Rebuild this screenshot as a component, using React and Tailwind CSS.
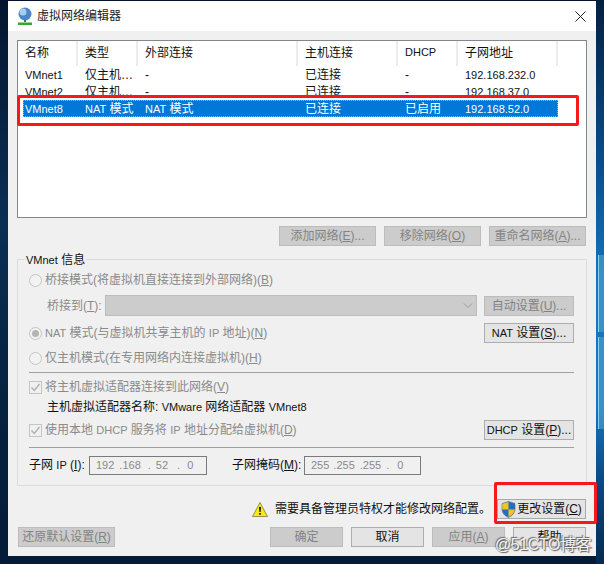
const hl = 'text-white bg-[#0078d7]'

// Latin runs are a bit smaller than the CJK text around them
function L({ children }) {
  return <span className="text-[11px]">{children}</span>
}

function Btn({ w = 'w-[97px]', off, children }) {
  return (
    <div
      className={`flex h-5 shrink-0 items-center justify-center whitespace-nowrap border ${w} ${
        off ? 'border-[#bcbcbc] bg-[#cccccc] text-[#838383]' : 'border-[#adadad] bg-[#e4e4e4] text-[#111]'
      }`}
    >
      <span>{children}</span>
    </div>
  )
}

function Radio({ on }) {
  return (
    <span className="mr-[3px] flex h-[13px] w-[13px] shrink-0 items-center justify-center rounded-full border border-[#c4c4c4] bg-[#f2f2f2]">
      {on && <span className="h-[7px] w-[7px] rounded-full bg-[#b4b4b4]" />}
    </span>
  )
}

function Check() {
  return (
    <span className="mr-[3px] flex h-[13px] w-[13px] shrink-0 items-center justify-center border border-[#c4c4c4] bg-[#f0f0f0]">
      <svg width="11" height="11" viewBox="0 0 11 11" fill="none">
        <path d="M1.5 5.5 4.3 8.5 9.5 2" stroke="#b0b0b0" strokeWidth="1.4" />
      </svg>
    </span>
  )
}

function Row({ cols, className = 'text-[#111]' }) {
  const widths = ['w-[55px] pl-[2px]', 'w-[60px] pl-[7px]', 'w-[160px] pl-[7px]', 'w-[100px] pl-[7px]', 'w-[60px] pl-[7px]', 'w-[100px] pl-[7px]']
  return (
    <div className={`flex h-[17px] w-[535px] items-center overflow-hidden whitespace-nowrap ${className}`}>
      {cols.map((c, i) => (
        <div key={i} className={`shrink-0 ${widths[i]}`}>{c}</div>
      ))}
    </div>
  )
}

function Head({ w, children }) {
  return (
    <div className={`flex h-[25px] shrink-0 items-center border-r-2 border-[#ececec] pl-[7px] pb-[2px] text-[#111] ${w}`}>{children}</div>
  )
}

function IpBox({ w = 'w-[118px]', children }) {
  return (
    <div className={`flex h-[19px] items-center whitespace-pre border border-[#7a7a7a] bg-[#f0f0f0] pl-[6px] text-[11px] text-[#8a8a8a] ${w}`}>
      {children}
    </div>
  )
}

function Globe() {
  return (
    <svg width="16" height="18" viewBox="0 0 16 18">
      <circle cx="8" cy="7" r="6.5" fill="#4a86c8" />
      <circle cx="6" cy="5" r="3.5" fill="#a9cdf0" />
      <path d="M8 13v2" stroke="#5a6a5a" strokeWidth="2" />
      <path d="M1 15.5h14V18H1z" fill="#2faa2f" />
    </svg>
  )
}

function Shield() {
  return (
    <svg width="15" height="17" viewBox="0 0 15 17">
      <path d="M7.5.5 14 2.5V8c0 4-3 7-6.500 8.500C4 15 1 12 1 8V2.500z" fill="#1f6fc4" stroke="#5a6a80" strokeWidth=".6" />
      <path d="M7.500 1v7.500H1.200V8 2.800zM7.500 8.500h6.300C13.500 12 10.800 14.800 7.500 16z" fill="#f5c21e" />
    </svg>
  )
}

export default function App() {
  return (
    <div className="relative h-[564px] w-[604px] overflow-hidden bg-[linear-gradient(180deg,#03152e_0%,#0a2f55_40%,#062544_62%,#041a38_100%)] px-2 pt-px text-xs leading-none [font-family:'Liberation_Sans','Noto_Sans_CJK_SC',sans-serif]">
      {/* wallpaper showing on the right of the dialog */}
      <div className="absolute bottom-0 right-0 top-0 w-2 bg-[linear-gradient(180deg,#04203f_0%,#0a4f8f_30%,#1575bd_50%,#1575bd_72%,#0a4a85_85%,#052a50_100%)]">
        <div className="absolute left-[2px] right-0 top-[255px] h-[77px] border-l border-[#8fd0e8] bg-[#5aaed8]/50" />
        <div className="absolute left-[2px] right-0 top-[337px] h-[92px] border-l border-[#8fd0e8] bg-[#5aaed8]/50" />
      </div>

      <div className="relative h-[555px] w-[588px] bg-[#f0f0f0]">
        <div className="flex h-[30px] items-center justify-between bg-white pl-[9px] pr-[10px]">
          <div className="flex items-center gap-[4px] text-[#222]">
            <Globe />
            <span className="text-xs">虚拟网络编辑器</span>
          </div>
          <svg width="11" height="11" viewBox="0 0 11 11" stroke="#222" strokeWidth="1" fill="none">
            <path d="M.5.5l10 10M10.500.5l-10 10" />
          </svg>
        </div>

        <div className="px-[9px] pt-[9px]">
          <div className="h-[178px] w-[570px] border border-[#82878c] bg-white pl-[5px]">
            <div className="flex">
              <Head w="w-[55px] !pl-[2px]">名称</Head>
              <Head w="w-[60px]">类型</Head>
              <Head w="w-[160px]">外部连接</Head>
              <Head w="w-[100px]">主机连接</Head>
              <Head w="w-[60px]"><L>DHCP</L></Head>
              <Head w="w-[100px]">子网地址</Head>
            </div>
            <Row cols={[<L>VMnet1</L>, '仅主机…', '-', '已连接', '-', <L>192.168.232.0</L>]} />
            <Row cols={[<L>VMnet2</L>, '仅主机…', '-', '已连接', '-', <L>192.168.37.0</L>]} />
            <Row
              className={`${hl} outline-1 -outline-offset-1 outline-dotted outline-[#e8a050]`}
              cols={[<L>VMnet8</L>, <><L>NAT</L> 模式</>, <><L>NAT</L> 模式</>, '已连接', '已启用', <L>192.168.52.0</L>]}
            />
          </div>

          <div className="mr-px mt-[8px] flex justify-end gap-[8px]">
            <Btn off>添加网络(<u>E</u>)...</Btn>
            <Btn off>移除网络(<u>O</u>)</Btn>
            <Btn off>重命名网络(<u>A</u>)...</Btn>
          </div>

          <div className="relative mt-[13px] h-[227px] w-[570px] border border-[#dcdcdc] pl-[11px] pr-[12px] pt-[10px]">
            <span className="absolute -top-[6px] left-[7px] bg-[#f0f0f0] px-px text-[#111]"><L>VMnet</L> 信息</span>

            <div className="flex h-5 items-center text-[#8a8a8a]">
              <Radio /><span>桥接模式(将虚拟机直接连接到外部网络)(<u>B</u>)</span>
            </div>

            <div className="mt-[5px] flex h-[21px] items-center text-[#8a8a8a]">
              <span className="w-[76px] pl-[18px]">桥接到(<u>T</u>):</span>
              <div className="flex h-[21px] w-[372px] items-center justify-end border border-[#bcbcbc] bg-[#cccccc] pr-[3px]">
                <svg width="10" height="6" viewBox="0 0 10 6" fill="none" stroke="#9a9a9a">
                  <path d="M1 .5l4 4 4-4" />
                </svg>
              </div>
              <div className="ml-[7px]"><Btn off w="w-[90px]">自动设置(<u>U</u>)...</Btn></div>
            </div>

            <div className="mt-[7px] flex h-5 items-center justify-between text-[#8a8a8a]">
              <div className="flex items-center">
                <Radio on /><span><L>NAT</L> 模式(与虚拟机共享主机的 <L>IP</L> 地址)(<u>N</u>)</span>
              </div>
              <Btn w="w-[90px]"><L>NAT</L> 设置(<u>S</u>)...</Btn>
            </div>

            <div className="mt-[5px] flex h-5 items-center text-[#8a8a8a]">
              <Radio /><span>仅主机模式(在专用网络内连接虚拟机)(<u>H</u>)</span>
            </div>

            <div className="mt-[4px] h-px bg-[#a0a0a0]" />

            <div className="mt-[4px] flex h-5 items-center text-[#8a8a8a]">
              <Check /><span>将主机虚拟适配器连接到此网络(<u>V</u>)</span>
            </div>

            <div className="flex h-5 items-center pl-[18px] text-[#111]">
              <span>主机虚拟适配器名称: <L>VMware</L> 网络适配器 <L>VMnet8</L></span>
            </div>

            <div className="mt-[3px] flex h-5 items-center justify-between text-[#8a8a8a]">
              <div className="flex items-center">
                <Check /><span>使用本地 <L>DHCP</L> 服务将 <L>IP</L> 地址分配给虚拟机(<u>D</u>)</span>
              </div>
              <Btn w="w-[90px]"><L>DHCP</L> 设置(<u>P</u>)...</Btn>
            </div>

            <div className="mt-[7px] h-px bg-[#a0a0a0]" />

            <div className="mt-[7px] flex h-5 items-center text-[#111]">
              <span className="w-[60px]">子网 <L>IP</L> (<u>I</u>):</span>
              <IpBox>
                <span>192</span><span className="ml-[5px]">.168</span><span className="ml-[7px]">.</span>
                <span className="ml-[5px]">52</span><span className="ml-[9px]">.</span><span className="ml-[7px]">0</span>
              </IpBox>
              <span className="ml-[25px] w-[72px]">子网掩码(<u>M</u>):</span>
              <IpBox w="w-[117px]">
                <span>255</span><span className="ml-[4px]">.255</span><span className="ml-[5px]">.255</span>
                <span className="ml-[5px]">.</span><span className="ml-[8px]">0</span>
              </IpBox>
            </div>
          </div>

          <div className="mr-px mt-[13px] flex h-5 items-center justify-end">
            <svg width="16" height="15" viewBox="0 0 16 15" className="mr-[7px]">
              <path d="M8 .5 15.500 14.500H.5z" fill="#f8e81c" stroke="#6b6b3a" strokeWidth=".7" />
              <path d="M7 5h2l-.4 5H7.400zM7.200 11h1.600v1.800H7.200z" fill="#111" />
            </svg>
            <span className="text-[#111]">需要具备管理员特权才能修改网络配置。</span>
            <div className="ml-[6px]">
              <div className="flex h-5 w-[89px] items-center justify-center whitespace-nowrap border border-[#a8a8a8] bg-[#e4e4e4] text-[#111]">
                <span className="mr-px"><Shield /></span><span>更改设置(<u>C</u>)</span>
              </div>
            </div>
          </div>

          <div className="ml-px mr-px mt-[8px] flex h-5 items-center">
            <Btn off>还原默认设置(<u>R</u>)</Btn>
            <div className="ml-auto flex gap-[8px]">
              <Btn off w="w-[73px]">确定</Btn>
              <Btn w="w-[73px]">取消</Btn>
              <Btn off w="w-[73px]">应用(<u>A</u>)</Btn>
              <Btn w="w-[73px]">帮助</Btn>
            </div>
          </div>
        </div>
      </div>

      <div className="absolute left-[17px] top-[95px] h-[31px] w-[562px] rounded-[2px] border-[3px] border-[#f5191c]" />
      <div className="absolute left-[494px] top-[482px] h-[42px] w-[103px] rounded-[2px] border-[3px] border-[#f5191c]" />
      <span className="absolute left-[495px] top-[537px] text-[16px] tracking-tight text-[#f2f2f2] [text-shadow:1px_1px_1px_#555,-1px_-1px_1px_#666]">@51CTO博客</span>
    </div>
  )
}
